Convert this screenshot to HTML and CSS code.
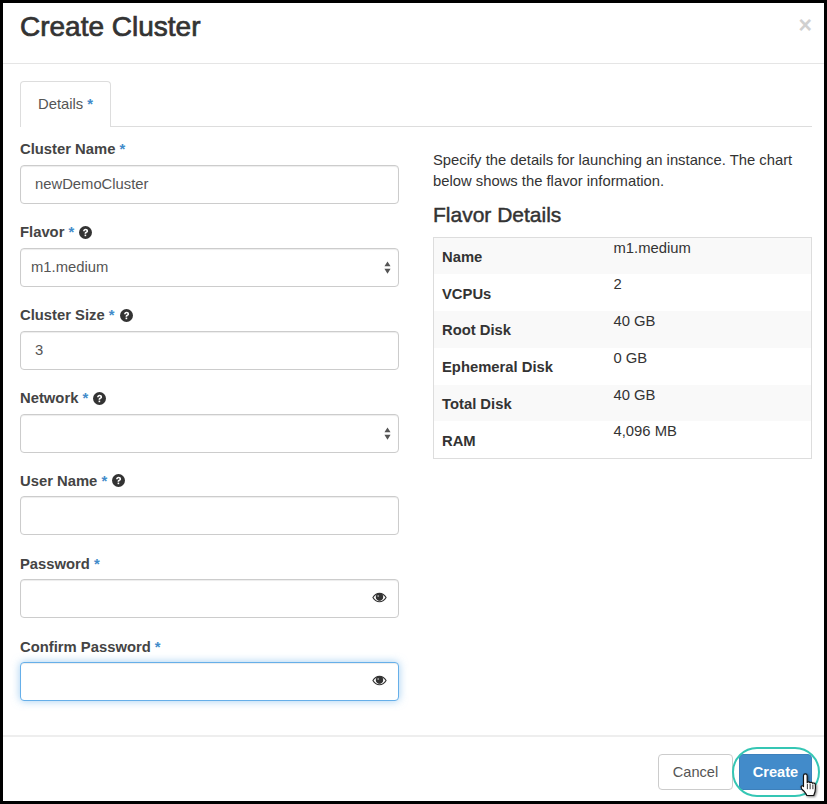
FILE: index.html
```html
<!DOCTYPE html>
<html>
  <head>
    <title>Create Cluster</title>
    <link rel="stylesheet" href="styles.css">
  </head>
  <body>
    <svg class="icon-defs">
      <symbol id="icon-help" viewBox="0 0 24 24">
        <circle cx="12" cy="12" r="12" fill="#333"/>
        <path d="M7.500 9.500C7.500 6.800 9.500 5 12.200 5c2.600 0 4.600 1.700 4.600 4 0 1.900-1.100 2.800-2.400 3.600-.9.600-1.100 1-1.100 1.900h-3c0-1.900.6-2.800 2-3.700 1.100-.7 1.500-1.100 1.500-1.800 0-.8-.7-1.300-1.600-1.300-1 0-1.700.7-1.700 1.800z" fill="#fff"/>
        <rect x="10.300" y="15.800" width="3" height="3" fill="#fff"/>
      </symbol>
      <symbol id="icon-eye" viewBox="0 0 16 11">
        <path d="M8 .5C4.800.5 2 2.300.3 5.500 2 8.700 4.800 10.500 8 10.500s6-1.800 7.700-5C14 2.300 11.200.5 8 .5zm0 8.900c-2.600 0-4.800-1.400-6.300-3.900C2.700 3.900 3.900 2.800 5.300 2.200a3.800 3.800 0 1 0 5.400 0c1.400.6 2.600 1.700 3.600 3.300-1.500 2.500-3.700 3.900-6.300 3.900z" fill="#333"/>
        <circle cx="8" cy="5" r="3.700" fill="#333"/>
        <circle cx="6.600" cy="3.900" r="1" fill="#999"/>
      </symbol>
      <symbol id="icon-updown" viewBox="0 0 8 14">
        <path d="M4 0l3.500 5.500h-7zM4 14L.5 8.500h7z" fill="#555"/>
      </symbol>
    </svg>

    <div class="modal">
      <div class="modal-header">
        <h4 class="modal-title">Create Cluster</h4>
        <span class="close">&times;</span>
      </div>

      <div class="modal-body">
        <div class="tabs">
          <div class="tab">Details <span class="req">*</span></div>
        </div>

        <div class="columns">
          <div class="form">
            <div class="field">
              <label>Cluster Name <span class="req">*</span></label>
              <div class="control">
                <input class="input" value="newDemoCluster">
              </div>
            </div>

            <div class="field">
              <label>Flavor <span class="req">*</span> <svg class="help"><use href="#icon-help"/></svg></label>
              <div class="control">
                <select class="input select"><option>m1.medium</option></select>
                <svg class="updown"><use href="#icon-updown"/></svg>
              </div>
            </div>

            <div class="field">
              <label>Cluster Size <span class="req">*</span> <svg class="help"><use href="#icon-help"/></svg></label>
              <div class="control">
                <input class="input" value="3">
              </div>
            </div>

            <div class="field">
              <label>Network <span class="req">*</span> <svg class="help"><use href="#icon-help"/></svg></label>
              <div class="control">
                <select class="input select"><option></option></select>
                <svg class="updown"><use href="#icon-updown"/></svg>
              </div>
            </div>

            <div class="field">
              <label>User Name <span class="req">*</span> <svg class="help"><use href="#icon-help"/></svg></label>
              <div class="control">
                <input class="input">
              </div>
            </div>

            <div class="field">
              <label>Password <span class="req">*</span></label>
              <div class="control">
                <input class="input">
                <svg class="eye"><use href="#icon-eye"/></svg>
              </div>
            </div>

            <div class="field">
              <label>Confirm Password <span class="req">*</span></label>
              <div class="control">
                <input class="input focused">
                <svg class="eye"><use href="#icon-eye"/></svg>
              </div>
            </div>
          </div>

          <div class="side">
            <p class="help-text">Specify the details for launching an instance. The chart below shows the flavor information.</p>
            <h4 class="side-title">Flavor Details</h4>
            <table class="flavors">
              <tr><th>Name</th><td>m1.medium</td></tr>
              <tr><th>VCPUs</th><td>2</td></tr>
              <tr><th>Root Disk</th><td>40 GB</td></tr>
              <tr><th>Ephemeral Disk</th><td>0 GB</td></tr>
              <tr><th>Total Disk</th><td>40 GB</td></tr>
              <tr><th>RAM</th><td>4,096 MB</td></tr>
            </table>
          </div>
        </div>
      </div>

      <div class="modal-footer">
        <button class="btn">Cancel</button>
        <button class="btn btn-primary">Create
          <span class="ring"></span>
          <svg class="pointer" viewBox="0 0 18 25"><path d="M5 1.500c1 0 1.800.8 1.800 1.800v6.500c.3-1 2.300-1 2.700.2.400-.8 2.200-.7 2.500.5.500-.6 2.300-.4 2.500 1 .2 2 .2 4.500-.2 6.500-.3 1.500-1 2.500-1.300 4H6.500c-.4-1.500-1.800-3-3-4.500C2.500 17 1 15 1 13.800c0-1.200 1.500-1.300 2.200-.5l.1.300V3.300c0-1 .7-1.800 1.700-1.800z" fill="#fff" stroke="#111" stroke-width="1.100" stroke-linejoin="round"/><path d="M7 11v5M9.600 11v5M12.200 11.500V16" stroke="#111" stroke-width=".8" fill="none"/></svg>
        </button>
      </div>
    </div>
  </body>
</html>
```

FILE: styles.css
```css
* {
  box-sizing: border-box;
}

html,
body {
  height: 100%;
}

body {
  margin: 0;
  padding: 3px;
  background: #000;
  font-family: "Liberation Sans", Arial, sans-serif;
  font-size: 14.8px;
  line-height: 20px;
  color: #333;
}

.icon-defs {
  display: none;
}

.modal {
  display: flex;
  flex-direction: column;
  height: 798px;
  background: #fff;
}

.modal-header {
  display: flex;
  justify-content: space-between;
  height: 61px;
  padding: 9px 12px 0 17px;
  border-bottom: 1px solid #e5e5e5;
}

.modal-title {
  margin: 0;
  font-size: 28px;
  line-height: 30px;
  font-weight: normal;
  -webkit-text-stroke: 0.7px #333;
  color: #333;
}

.close {
  margin-top: -1px;
  font-size: 23px;
  line-height: 28px;
  font-weight: bold;
  color: #d0d0d0;
}

.modal-body {
  flex: 1;
  padding: 17px 12px 0 17px;
}

.tabs {
  display: flex;
  height: 46px;
  border-bottom: 1px solid #ddd;
}

.tab {
  width: 91px;
  height: 46px;
  padding: 12px 0 0 17px;
  color: #555;
  background: #fff;
  border: 1px solid #ddd;
  border-bottom: none;
  border-radius: 4px 4px 0 0;
}

.req {
  color: #428bca;
  font-weight: bold;
}

.columns {
  display: grid;
  grid-template-columns: 379px 379px;
  column-gap: 34px;
  padding-top: 12px;
}

.field {
  margin-bottom: 17.9px;
}

.field label {
  display: block;
  padding-top: 0.4px;
  margin-bottom: 5.6px;
  font-weight: bold;
  color: #444;
}

.help {
  width: 13px;
  height: 13px;
  margin-left: 1px;
  vertical-align: -1.500px;
}

.control {
  position: relative;
}

.input {
  display: block;
  width: 100%;
  height: 39px;
  padding: 6px 14px;
  font-family: inherit;
  font-size: 14.8px;
  color: #555;
  background: #fff;
  border: 1px solid #ccc;
  border-radius: 4px;
  box-shadow: inset 0 1px 1px rgba(0, 0, 0, 0.075);
  outline: none;
}

.select {
  padding: 6px 10px;
  appearance: none;
}

.focused {
  border-color: #66afe9;
  box-shadow: inset 0 1px 1px rgba(0, 0, 0, 0.075), 0 0 8px rgba(102, 175, 233, 0.6);
}

.updown {
  position: absolute;
  top: 13px;
  right: 8px;
  width: 7px;
  height: 13px;
}

.eye {
  position: absolute;
  top: 12.500px;
  right: 12px;
  width: 15px;
  height: 11px;
}

.help-text {
  margin: 11px 0 0;
  line-height: 21px;
  color: #333;
}

.side-title {
  margin: 12px 0 11px;
  font-size: 21px;
  line-height: 22px;
  font-weight: normal;
  -webkit-text-stroke: 0.45px #333;
  color: #333;
}

.flavors {
  width: 100%;
  border-collapse: collapse;
  border: 1px solid #ddd;
}

.flavors tr {
  height: 36.800px;
}

.flavors tr:nth-child(odd) {
  background: #f9f9f9;
}

.flavors th {
  width: 180px;
  padding: 9px 8px 7px;
  text-align: left;
  color: #333;
}

.flavors td {
  padding: 0;
  vertical-align: top;
  line-height: 20px;
  color: #333;
}

.modal-footer {
  display: flex;
  justify-content: flex-end;
  gap: 6px;
  height: 66px;
  padding: 17px 12px 0 0;
  border-top: 2px solid #eee;
}

.btn {
  position: relative;
  width: 75px;
  height: 36px;
  font-family: inherit;
  font-size: 14.6px;
  color: #555;
  background: #fff;
  border: 1px solid #ccc;
  border-radius: 4px;
}

.btn-primary {
  width: 73px;
  font-weight: bold;
  color: #fff;
  background: #428bca;
  border-color: #3d80bb;
}

.ring {
  position: absolute;
  top: -8px;
  left: -8px;
  width: 88px;
  height: 50px;
  border: 2.500px solid #35c6b4;
  border-radius: 25px;
}

.pointer {
  position: absolute;
  top: 17px;
  left: 60px;
  width: 19px;
  height: 27px;
  filter: drop-shadow(1px 1px 1px rgba(0, 0, 0, 0.5));
}
```
